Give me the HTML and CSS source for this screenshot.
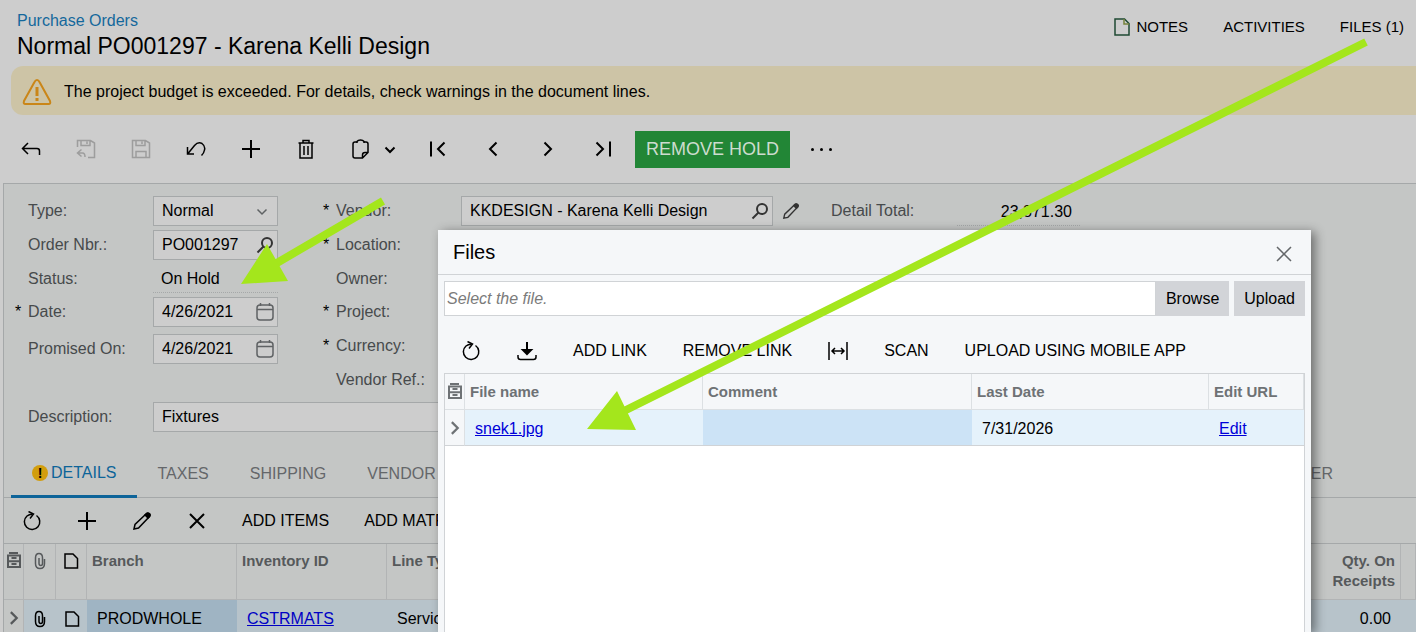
FILE: index.html
```html
<!DOCTYPE html>
<html lang="en">
  <head>
    <meta charset="UTF-8" />
    <meta name="viewport" content="width=device-width, initial-scale=1.0" />
    <title>Purchase Orders</title>
    <link rel="stylesheet" href="styles.css">
  </head>
  <body>
    <!-- Icons -->
    <svg class="sprite" aria-hidden="true">
      <symbol id="back" viewBox="0 0 20 20"><path d="M7 4 1.500 9.500 7 15M2 9.500h14q2.500 0 2.500 2.500v4" /></symbol>
      <symbol id="saveback" viewBox="0 0 20 20"><path d="M1.500 8V1.500h13L18.500 4v14.500H12M5 1.500v5h9v-5M11 2.500V5M5.500 10.500l-4 3.500 4 3.500M2 14h4.500q2.500 0 2.500 4" /></symbol>
      <symbol id="save" viewBox="0 0 20 20"><path d="M1.500 1.500h13L18.500 4v14.500h-17zM5 1.500v5h9v-5M11 2.500V5M5 18v-5.500h10V18" /></symbol>
      <symbol id="undo" viewBox="0 0 20 20"><path d="M1.500 8v7H8M2 14.500 8.500 6.500Q12 2.500 16 4.500q3.500 2.500 2.500 6.500-.500 3-3 5.500" /></symbol>
      <symbol id="plus" viewBox="0 0 20 20"><path d="M10 1v18M1 10h18" /></symbol>
      <symbol id="trash" viewBox="0 0 20 20"><path d="M2.500 4h15M7 4V1.500h6V4M4 4v15h12V4M8 7v9M12 7v9" /></symbol>
      <symbol id="clip" viewBox="0 0 20 20"><path d="M6 3H4Q2 3 2 5v12q0 2 2 2h7.500L17 13.500V5q0-2-2-2h-2M6 4V2.500Q7 1 9.500 1T13 2.500V4M11.500 19v-3q0-2.500 2.500-2.500h3" /></symbol>
      <symbol id="down" viewBox="0 0 20 20"><path d="m5.500 8.500 4.500 4.500 4.500-4.500" /></symbol>
      <symbol id="first" viewBox="0 0 20 20"><path d="M3 2.500v15M16.500 3.500 10 10l6.500 6.500" /></symbol>
      <symbol id="prev" viewBox="0 0 20 20"><path d="M13.500 3.500 7 10l6.500 6.500" /></symbol>
      <symbol id="next" viewBox="0 0 20 20"><path d="M6.500 3.500 13 10l-6.500 6.500" /></symbol>
      <symbol id="last" viewBox="0 0 20 20"><path d="M3.500 3.500 10 10l-6.500 6.500M17 2.500v15" /></symbol>
      <symbol id="search" viewBox="0 0 20 20"><circle cx="12" cy="8" r="5" /><path d="m8.500 11.500-6 6" /></symbol>
      <symbol id="pencil" viewBox="0 0 20 20"><path d="m2 18 1-4.500L14 3q1.500-1.500 3-.500t.500 3L6.500 17z" /><path d="M13 4q2-2.500 4-1.500t.500 3L16 7z" fill="currentColor" /></symbol>
      <symbol id="calendar" viewBox="0 0 20 20"><rect x="2" y="3" width="16" height="15" rx="3" /><path d="M2 7.500h16M5.500 1v3M14.500 1v3" /></symbol>
      <symbol id="refresh" viewBox="0 0 20 20"><path d="M14.500 4.500a7.700 7.700 0 1 1-9.500.500Q7 3.500 10.500 3" /><path d="m6.500.500 5 2.500L8 7.500" /></symbol>
      <symbol id="close" viewBox="0 0 20 20"><path d="m3 3 14 14M17 3 3 17" /></symbol>
      <symbol id="download" viewBox="0 0 20 20"><path d="M1 14v2q0 2.500 2.500 2.500h13Q19 18.500 19 16v-2" /><path d="M10 1v12M6 9l4 4 4-4z" fill="currentColor" stroke-width="2" /></symbol>
      <symbol id="fit" viewBox="0 0 20 20"><path d="M1 1v18M19 1v18M4 10h12M7 7l-3 3 3 3M13 7l3 3-3 3" /></symbol>
      <symbol id="note" viewBox="0 0 20 20"><path d="M4 3h8l4.500 4.500V17H4z" /></symbol>
      <symbol id="attach" viewBox="0 0 20 20"><path d="M5.500 6.500v6q0 5 4.500 5t4.500-5V8M5.500 7q0-4.500 3.500-4.500T12.500 7v5.500q0 2-1.700 2T9 12.500V7" /></symbol>
      <symbol id="columns" viewBox="0 0 14 16"><path d="M2 1h9M1 3.500h12V15H1zM1 9.200h12" /><path d="M4.500 6h5M4.500 12h5" /></symbol>
    </svg>

    <header class="header">
      <div>
        <a class="crumb" href="#">Purchase Orders</a>
        <h1>Normal PO001297 - Karena Kelli Design</h1>
      </div>
      <nav class="links">
        <a href="#"><svg class="doc" viewBox="0 0 18 20"><path d="M2 2h9.500L16 6.500V18H2z" /><path class="fold" d="M11 2v5h5" /></svg>NOTES</a>
        <a href="#">ACTIVITIES</a>
        <a href="#">FILES (1)</a>
      </nav>
    </header>

    <div class="warning">
      <svg viewBox="0 0 30 28"><path d="M15 2q1.500 0 2.500 2L28 23q1 3-1.500 3h-23Q1 26 2 23L12.500 4Q13.500 2 15 2z" /><path class="mark" d="M15 9v9M15 20v3" /></svg>
      <span>The project budget is exceeded. For details, check warnings in the document lines.</span>
    </div>

    <div class="toolbar">
      <button aria-label="Back"><svg><use href="#back" /></svg></button>
      <button aria-label="Save and close" disabled><svg><use href="#saveback" /></svg></button>
      <button aria-label="Save" disabled><svg><use href="#save" /></svg></button>
      <button aria-label="Undo"><svg><use href="#undo" /></svg></button>
      <button class="bold" aria-label="Add"><svg><use href="#plus" /></svg></button>
      <button aria-label="Delete"><svg><use href="#trash" /></svg></button>
      <button class="menu" aria-label="Clipboard"><svg><use href="#clip" /></svg><svg class="caret"><use href="#down" /></svg></button>
      <button class="bold" aria-label="First"><svg><use href="#first" /></svg></button>
      <button class="bold" aria-label="Previous"><svg><use href="#prev" /></svg></button>
      <button class="bold" aria-label="Next"><svg><use href="#next" /></svg></button>
      <button class="bold" aria-label="Last"><svg><use href="#last" /></svg></button>
      <button class="hold">REMOVE HOLD</button>
      <button class="more" aria-label="More"><i></i><i></i><i></i></button>
    </div>

    <main class="panel">
      <form class="form">
        <div class="column main">
          <div class="row"><label for="type">Type:</label><div class="field"><select id="type"><option>Normal</option></select><svg class="gray"><use href="#down" /></svg></div></div>
          <div class="row"><label for="order">Order Nbr.:</label><div class="field"><input id="order" value="PO001297"><svg><use href="#search" /></svg></div></div>
          <div class="row short"><label for="status">Status:</label><output class="readonly" id="status">On Hold</output></div>
          <div class="row required spaced"><label for="date">Date:</label><div class="field"><input id="date" value="4/26/2021"><svg class="gray"><use href="#calendar" /></svg></div></div>
          <div class="row"><label for="promised">Promised On:</label><div class="field"><input id="promised" value="4/26/2021"><svg class="gray"><use href="#calendar" /></svg></div></div>
        </div>
        <div class="column">
          <div class="row required"><label for="vendor">Vendor:</label><div class="field"><input id="vendor" value="KKDESIGN - Karena Kelli Design"><svg><use href="#search" /></svg></div><button class="edit" type="button" aria-label="Edit vendor"><svg><use href="#pencil" /></svg></button></div>
          <div class="row required"><span>Location:</span></div>
          <div class="row short"><span>Owner:</span></div>
          <div class="row required"><span>Project:</span></div>
          <div class="row required"><span>Currency:</span></div>
          <div class="row"><span>Vendor Ref.:</span></div>
        </div>
        <div class="column totals">
          <div class="row"><label for="total">Detail Total:</label><output class="readonly" id="total">23,871.30</output></div>
        </div>
        <div class="row description"><label for="description">Description:</label><div class="field"><input id="description" value="Fixtures"></div></div>
      </form>

      <nav class="tabs">
        <a class="active" href="#"><b>!</b>DETAILS</a>
        <a href="#">TAXES</a>
        <a href="#">SHIPPING</a>
        <a href="#">VENDOR</a>
        <a class="end" href="#">OTHER</a>
      </nav>

      <div class="toolbar grid-toolbar">
        <button aria-label="Refresh"><svg><use href="#refresh" /></svg></button>
        <button class="bold" aria-label="Add row"><svg><use href="#plus" /></svg></button>
        <button aria-label="Edit row"><svg><use href="#pencil" /></svg></button>
        <button class="bold" aria-label="Delete row"><svg><use href="#close" /></svg></button>
        <button class="text">ADD ITEMS</button>
        <button class="text">ADD MATRIX</button>
      </div>

      <table class="lines">
        <colgroup><col class="c20"><col class="c32"><col class="c31"><col class="c150"><col class="c150"><col><col class="c90"><col class="c15"></colgroup>
        <thead>
          <tr>
            <th class="icon"><svg class="columns"><use href="#columns" /></svg></th>
            <th class="icon"><svg><use href="#attach" /></svg></th>
            <th class="icon dark"><svg><use href="#note" /></svg></th>
            <th>Branch</th>
            <th>Inventory ID</th>
            <th>Line Type</th>
            <th class="number">Qty. On Receipts</th>
            <th></th>
          </tr>
        </thead>
        <tbody>
          <tr>
            <td class="icon mark"><svg><use href="#next" /></svg></td>
            <td class="icon"><svg><use href="#attach" /></svg></td>
            <td class="icon"><svg><use href="#note" /></svg></td>
            <td class="current">PRODWHOLE</td>
            <td><a href="#">CSTRMATS</a></td>
            <td>Service</td>
            <td class="number">0.00</td>
            <td></td>
          </tr>
        </tbody>
      </table>
    </main>

    <section class="dialog" role="dialog" aria-labelledby="files">
      <div class="dialog-title">
        <h2 id="files">Files</h2>
        <button aria-label="Close"><svg><use href="#close" /></svg></button>
      </div>
      <div class="upload">
        <input placeholder="Select the file." aria-label="File">
        <button>Browse</button>
        <button>Upload</button>
      </div>
      <div class="toolbar file-toolbar">
        <button aria-label="Refresh"><svg><use href="#refresh" /></svg></button>
        <button aria-label="Download"><svg><use href="#download" /></svg></button>
        <button class="text">ADD LINK</button>
        <button class="text">REMOVE LINK</button>
        <button aria-label="Fit columns"><svg><use href="#fit" /></svg></button>
        <button class="text">SCAN</button>
        <button class="text">UPLOAD USING MOBILE APP</button>
      </div>
      <div class="files">
        <table>
          <colgroup><col class="c20"><col class="c238"><col><col class="c237"><col class="c95"></colgroup>
          <thead>
            <tr>
              <th class="icon"><svg class="columns"><use href="#columns" /></svg></th>
              <th>File name</th>
              <th>Comment</th>
              <th>Last Date</th>
              <th>Edit URL</th>
            </tr>
          </thead>
          <tbody>
            <tr>
              <td class="icon mark"><svg><use href="#next" /></svg></td>
              <td><a href="#">snek1.jpg</a></td>
              <td class="current"></td>
              <td>7/31/2026</td>
              <td><a href="#">Edit</a></td>
            </tr>
          </tbody>
        </table>
      </div>
    </section>

    <!-- Pointer arrows -->
    <svg class="arrows" aria-hidden="true">
      <path d="M383 201 270 267M1366 42 620 413" />
      <path class="head" d="m241 284 26-40 21 37zM587 429l30-38 19 39z" />
    </svg>
  </body>
</html>
```
FILE: styles.css
```css
* {
    box-sizing: border-box;
}

body {
    position: relative;
    margin: 0;
    height: 100vh;
    overflow: hidden;
    display: flex;
    flex-direction: column;
    font-family: "Liberation Sans", Arial, sans-serif;
    font-size: 16px;
    line-height: 20px;
    background-color: #cdcdcd;
    color: #000;
}

h1, h2 {
    margin: 0;
    font-weight: normal;
}

button, input, select {
    font: inherit;
    color: inherit;
}

button {
    padding: 0;
    border: none;
    background: none;
    cursor: pointer;
}

svg {
    flex: none;
    width: 20px;
    height: 20px;
    fill: none;
    stroke: currentColor;
    stroke-width: 1.5;
}

.sprite {
    position: absolute;
    width: 0;
    height: 0;
}

/* Header */
.header {
    flex: none;
    display: flex;
    justify-content: space-between;
    height: 66px;
    padding: 11px 12px 0 17px;
}

.crumb {
    display: block;
    color: #14689c;
    text-decoration: none;
}

h1 {
    font-size: 23px;
    line-height: 30px;
}

.links {
    display: flex;
    gap: 35px;
    padding-top: 6px;
    font-size: 15px;
}

.links a {
    display: flex;
    gap: 5px;
    height: 20px;
    color: #000;
    text-decoration: none;
}

.doc {
    width: 18px;
    stroke: #1f4a33;
}

.doc .fold {
    stroke: #75833b;
}

.warning {
    flex: none;
    display: flex;
    align-items: center;
    gap: 12px;
    height: 49px;
    margin-left: 11px;
    padding: 2px 0 0 11px;
    border-radius: 12px 0 0 12px;
    background-color: #cdc4a6;
}

.warning svg {
    width: 30px;
    height: 28px;
    color: #ca8618;
    stroke-width: 2;
}

.warning .mark {
    stroke-width: 3;
}

/* Toolbars */
.toolbar {
    flex: none;
    display: flex;
    align-items: center;
    gap: 35px;
    height: 68px;
    padding-left: 21px;
}

.toolbar button {
    display: flex;
    align-items: center;
    white-space: nowrap;
}

.toolbar button:disabled {
    color: #9d9d9d;
}

.toolbar .bold svg,
.toolbar .caret {
    stroke-width: 2;
}

.toolbar .menu {
    gap: 9px;
    margin-right: -7px;
}

.toolbar .hold {
    height: 37px;
    margin-left: -13px;
    padding: 0 11px;
    font-size: 18px;
    background-color: #228636;
    color: #cddccf;
}

.toolbar .more {
    gap: 6px;
    margin-left: -14px;
}

.more i {
    width: 3px;
    height: 3px;
    border-radius: 50%;
    background-color: #000;
}

/* Document form */
.panel {
    flex: 1;
    min-height: 0;
    margin-left: 3px;
    border: solid #a5a8a9;
    border-width: 1px 0 0 1px;
    background-color: #c4c6c5;
}

.form {
    display: grid;
    grid-template-columns: 277px 477px 1fr;
    column-gap: 31px;
    row-gap: 7px;
    padding: 12px 12px 0 11px;
}

.column {
    display: flex;
    flex-direction: column;
    gap: 4px;
}

.main {
    padding-right: 14px;
}

.row {
    display: flex;
    align-items: center;
    height: 30px;
    color: #474a4c;
}

.row::before {
    content: "";
    flex: none;
    width: 13px;
    color: #000;
}

.required::before {
    content: "*";
}

.row label,
.row > span {
    flex: none;
    width: 125px;
}

.short {
    height: 29px;
}

.spaced {
    margin-bottom: 3px;
}

.field {
    flex: 1;
    display: flex;
    align-items: center;
    height: 30px;
    padding-right: 2px;
    border: 1px solid #a5a8a9;
    background-color: #cdcdcd;
    color: #333;
}

.field input,
.field select {
    flex: 1;
    min-width: 0;
    width: 0;
    height: 28px;
    padding: 0 0 0 8px;
    border: none;
    outline: none;
    appearance: none;
    background: none;
    color: #000;
}

.field svg {
    stroke-width: 2;
}

.field .gray {
    color: #5f6264;
    stroke-width: 1.5;
}

.field select + svg {
    margin-right: 3px;
}

.readonly {
    flex: 1;
    height: 29px;
    padding: 5px 8px;
    border-bottom: 1px dotted #a5a8a9;
    color: #000;
}

.edit {
    display: flex;
    width: 27px;
    padding-left: 9px;
    color: #333;
}

.edit svg {
    width: 18px;
    height: 18px;
}

.totals label {
    width: 126px;
}

.totals .row::before {
    display: none;
}

.totals .readonly {
    flex: none;
    width: 123px;
    text-align: right;
}

.description {
    grid-column: 1 / 3;
    margin-right: 27px;
}

/* Tabs and order lines */
.tabs {
    display: flex;
    gap: 1px;
    height: 66px;
    padding: 16px 63px 0 7px;
    border-bottom: 1px solid #a5a8a9;
}

.tabs a {
    display: flex;
    align-items: center;
    padding: 2px 20px 0;
    color: #64676a;
    text-decoration: none;
}

.tabs .active {
    margin-bottom: -1px;
    padding-left: 21px;
    border-bottom: 3px solid #0d6499;
    color: #0d6499;
}

.tabs b {
    width: 16px;
    height: 16px;
    margin-right: 3px;
    border-radius: 50%;
    background-color: #d29d0d;
    color: #000;
    font-size: 14px;
    line-height: 16px;
    text-align: center;
}

.tabs .end {
    margin-left: auto;
}

.grid-toolbar {
    height: 45px;
    padding-left: 18px;
}

table {
    width: 100%;
    table-layout: fixed;
    border-collapse: separate;
    border-spacing: 0;
}

.c15 { width: 15px; }
.c20 { width: 20px; }
.c31 { width: 31px; }
.c32 { width: 32px; }
.c90 { width: 90px; }
.c95 { width: 95px; }
.c150 { width: 150px; }
.c237 { width: 237px; }
.c238 { width: 238px; }

th {
    padding: 7px 5px;
    border-right: 1px solid #b2b4b5;
    border-bottom: 1px solid #b2b4b5;
    color: #56595b;
    font-size: 15px;
    text-align: left;
    vertical-align: top;
}

td {
    height: 36px;
    padding: 2px 10px 0;
    background-color: #b7c3ca;
}

.number {
    text-align: right;
}

.icon {
    padding-left: 0;
    padding-right: 0;
    text-align: center;
}

.icon svg {
    display: block;
    margin: 0 auto;
}

.icon .columns {
    width: 14px;
    height: 16px;
    margin-top: 1px;
    stroke-width: 2;
}

.dark {
    color: #000;
}

td.mark {
    padding: 0;
    border-right: 1px solid #b2b4b5;
    background-color: #c4c6c5;
    color: #56595b;
}

td.mark svg {
    width: 18px;
    height: 18px;
    stroke-width: 2.5;
}

td.current {
    background-color: #9fb4c3;
}

td a {
    color: #0000c4;
}

.lines {
    border-top: 1px solid #a5a8a9;
}

.lines th {
    height: 56px;
}

/* Files dialog */
.dialog {
    position: absolute;
    top: 230px;
    right: 105px;
    bottom: 0;
    left: 438px;
    display: flex;
    flex-direction: column;
    background-color: #f5f7f9;
    box-shadow: 4px 2px 10px rgba(0, 0, 0, 0.45);
}

.dialog-title {
    display: flex;
    justify-content: space-between;
    align-items: center;
    height: 45px;
    padding: 0 17px 0 15px;
    border-bottom: 1px solid #d0d3d6;
}

.dialog-title button {
    display: flex;
    padding-top: 3px;
    color: #64676a;
}

h2 {
    font-size: 20px;
}

.upload {
    display: flex;
    height: 35px;
    margin: 6px 6px 0;
}

.upload input {
    flex: 1;
    padding: 0 2px;
    border: 1px solid #d0d3d6;
    outline: none;
    background-color: #fff;
}

.upload input::placeholder {
    color: #7b7b7b;
    font-style: italic;
}

.upload button {
    padding: 0 10px;
    background-color: #d2d4d8;
}

.upload button + button {
    margin-left: 5px;
}

.file-toolbar {
    gap: 36px;
    height: 57px;
    padding: 12px 0 0 23px;
}

.files {
    flex: 1;
    margin: 0 6px;
    border: solid #d0d3d6;
    border-width: 1px 1px 0;
    background-color: #fff;
}

.files th {
    height: 36px;
    padding-top: 8px;
    padding-bottom: 7px;
    border-color: #dce0e3;
    background-color: #f5f7f9;
    color: #6e7275;
}

.files td {
    border-bottom: 1px solid #d0d3d6;
    background-color: #e5f2fb;
}

.files td.mark {
    border-right-color: #dce0e3;
    background-color: #f5f7f9;
    color: #6e7275;
}

.files td.current {
    background-color: #cce3f6;
}

.files td a {
    color: #0000d8;
}

.arrows {
    position: absolute;
    top: 0;
    left: 0;
    width: 100%;
    height: 100%;
    pointer-events: none;
    color: #a4e61c;
    stroke-width: 8;
}

.arrows .head {
    fill: currentColor;
    stroke: none;
}
```
